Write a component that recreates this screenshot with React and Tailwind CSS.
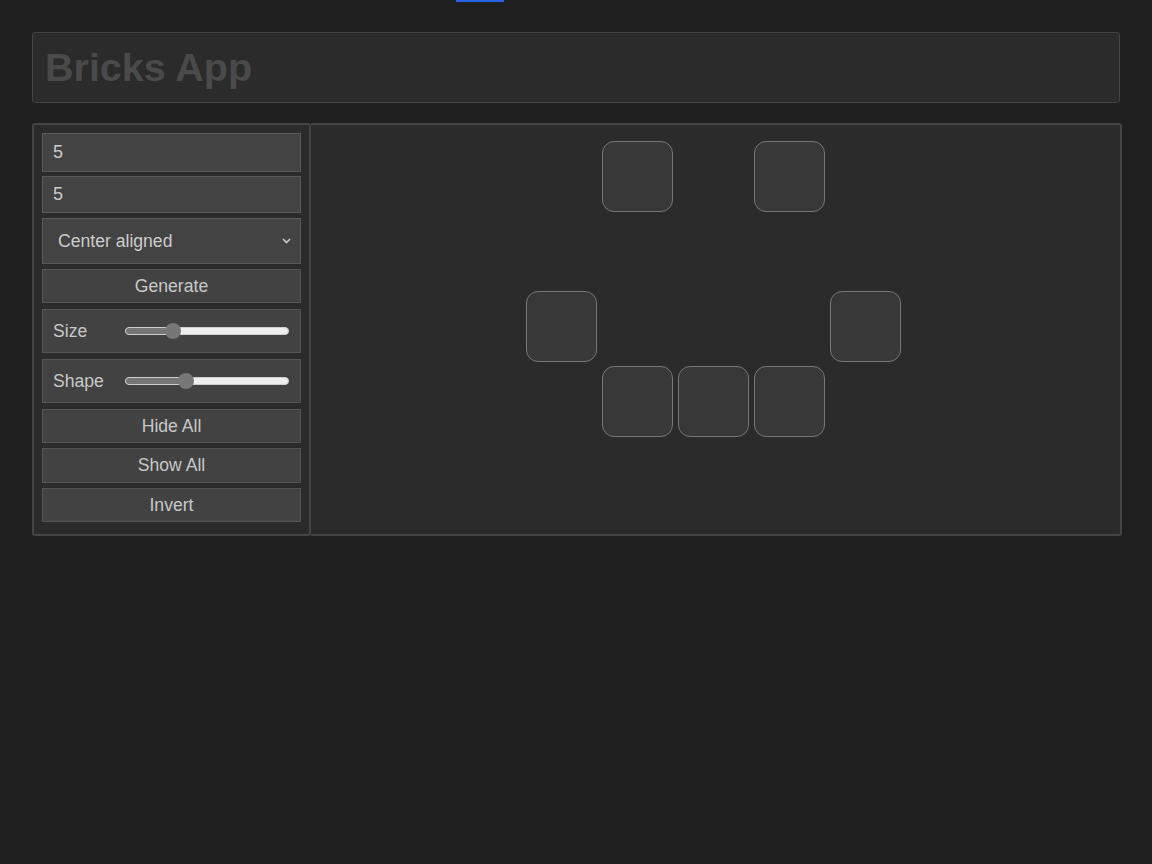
import React from "react";

function Field({ value, h, mt }) {
  return (
    <div
      className={`${h} ${mt} w-full border border-[#5a5a5a] bg-[#434343] flex items-center pl-[10px] text-[18px] text-[#cccccc]`}
    >
      {value}
    </div>
  );
}

function Btn({ label, h, mt }) {
  return (
    <button
      className={`${h} ${mt} w-full border border-[#555] bg-[#424242] flex items-center justify-center text-[17.6px] text-[#c8c8c8]`}
    >
      {label}
    </button>
  );
}

function SliderRow({ label, pct, mt }) {
  return (
    <div className={`h-[44px] ${mt} w-full border border-[#555] bg-[#424242] flex items-center pl-[10px] pr-[11px]`}>
      <span className="w-[72px] text-[17.6px] text-[#c8c8c8]">{label}</span>
      <div className="relative flex-1 h-[8px] rounded-full bg-[#eeeeee] border border-[#cfcfcf]">
        <div className="h-full rounded-l-full bg-[#777]" style={{ width: `${pct}%` }} />
        <div
          className="absolute top-1/2 w-[16px] h-[16px] -mt-[8px] -ml-[8px] rounded-full bg-[#777]"
          style={{ left: `${pct}%` }}
        />
      </div>
    </div>
  );
}

const pattern = [
  [0, 1, 0, 1, 0],
  [0, 0, 0, 0, 0],
  [1, 0, 0, 0, 1],
  [0, 1, 1, 1, 0],
  [0, 0, 0, 0, 0],
];

export default function App() {
  return (
    <div className="min-h-[864px] bg-[#1f1f1f] font-['Liberation_Sans',Arial,sans-serif] overflow-hidden">
      <div className="h-[2px] w-[48px] ml-[456px] bg-[#2563eb]" />
      <div className="mx-8 mt-[30px] h-[71px] border border-[#444] rounded-[3px] bg-[#2b2b2b] flex items-center px-3">
        <h1 className="text-[39.5px] font-bold text-[#4a4a4a] leading-none">Bricks App</h1>
      </div>
      <div className="ml-8 w-[1090px] mt-[20px] h-[413px] flex">
        <div className="w-[279px] border-2 border-[#444] rounded-[3px] bg-[#2b2b2b] px-[8px] pt-[8px] flex flex-col">
          <Field value="5" h="h-[39px]" mt="mt-0" />
          <Field value="5" h="h-[37px]" mt="mt-[4px]" />
          <div className="h-[46px] mt-[5px] w-full border border-[#5a5a5a] bg-[#434343] flex items-center pl-[15px] pr-[9px] text-[17.6px] text-[#cccccc]">
            <span className="flex-1">Center aligned</span>
            <svg width="9" height="6" viewBox="0 0 9 6" fill="none">
              <path d="M1 1l3.5 3.5L8 1" stroke="#cccccc" strokeWidth="1.6" />
            </svg>
          </div>
          <Btn label="Generate" h="h-[34px]" mt="mt-[5px]" />
          <SliderRow label="Size" pct={29} mt="mt-[6px]" />
          <SliderRow label="Shape" pct={37} mt="mt-[6px]" />
          <Btn label="Hide All" h="h-[34px]" mt="mt-[6px]" />
          <Btn label="Show All" h="h-[35px]" mt="mt-[5px]" />
          <Btn label="Invert" h="h-[34px]" mt="mt-[5px]" />
        </div>
        <div className="flex-1 border-2 border-l-0 border-[#444] rounded-r-[3px] bg-[#2b2b2b] flex justify-center pr-[5px] pt-[16px]">
          <div className="grid grid-cols-[repeat(5,71px)] auto-rows-[71px] gap-x-[5px] gap-y-[4px] h-fit">
            {pattern.flat().map((on, i) =>
              on ? (
                <div key={i} className="w-[71px] h-[71px] rounded-[12px] border border-[#777] bg-[#383838]" />
              ) : (
                <div key={i} className="w-[71px] h-[71px]" />
              )
            )}
          </div>
        </div>
      </div>
    </div>
  );
}
